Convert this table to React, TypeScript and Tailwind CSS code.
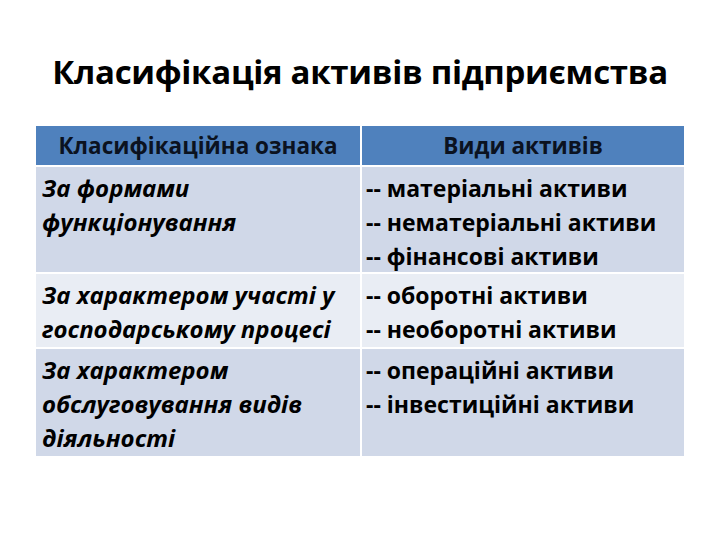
const rows = [
  {
    sign: ['За формами', 'функціонування'],
    kinds: ['-- матеріальні активи', '-- нематеріальні активи', '-- фінансові активи'],
    bg: 'bg-[#d0d8e8]',
    h: 'h-[105px]',
  },
  {
    sign: ['За характером участі у', 'господарському процесі'],
    kinds: ['-- оборотні активи', '-- необоротні активи'],
    bg: 'bg-[#e9edf4]',
    h: 'h-[73px]',
  },
  {
    sign: ['За характером', 'обслуговування видів', 'діяльності'],
    kinds: ['-- операційні активи', '-- інвестиційні активи'],
    bg: 'bg-[#d0d8e8]',
    h: 'h-[107px]',
  },
]

const App = () => {
  return (
    <div
      className="flex h-[540px] w-[720px] flex-col items-center bg-white text-black"
      style={{ fontFamily: '"Open Sans", "Noto Sans", sans-serif' }}
    >
      <h1 className="mt-[48px] h-[48px] text-[33px] leading-[48px] font-bold tracking-[-0.3px]">
        Класифікація активів підприємства
      </h1>

      <div className="mt-[30px] grid w-[648px] grid-cols-[324px_322px] gap-[2px] bg-white leading-[34px] font-bold">
        <div className="flex h-[39px] items-center justify-center bg-[#4f81bd] text-[22.5px] text-[#0b1220]">
          Класифікаційна ознака
        </div>
        <div className="flex h-[39px] items-center justify-center bg-[#4f81bd] text-[22.5px] text-[#0b1220]">
          Види активів
        </div>

        {rows.map((row, i) => (
          <div key={i} className="contents">
            <div className={`${row.bg} ${row.h} px-[6px] pt-[4px] text-[24px] italic`}>
              {row.sign.map((line) => (
                <div key={line} className="whitespace-nowrap">
                  {line}
                </div>
              ))}
            </div>
            <div className={`${row.bg} ${row.h} px-[4px] pt-[4px] text-[23px]`}>
              {row.kinds.map((line) => (
                <div key={line} className="whitespace-nowrap">
                  {line}
                </div>
              ))}
            </div>
          </div>
        ))}
      </div>
    </div>
  )
}

export default App
